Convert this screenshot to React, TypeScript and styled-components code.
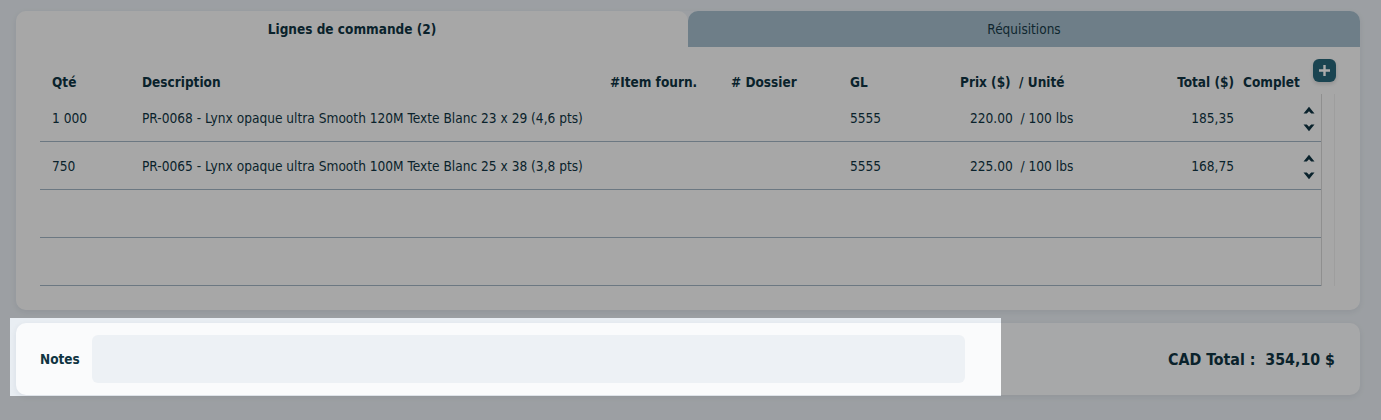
import styled, { createGlobalStyle } from "styled-components";

const GlobalStyle = createGlobalStyle`
  html, body {
    margin: 0;
    height: 100%;
    background: #e9eef3;
  }
  body {
    font-family: "DejaVu Sans Condensed", "DejaVu Sans", sans-serif;
    color: #0f3442;
  }
`;

const Page = styled.div`
  display: flex;
  flex-direction: column;
  gap: 13px;
  padding: 11px 21px 0 16px;
`;

const OrderCard = styled.div`
  display: flex;
  flex-direction: column;
  border-radius: 10px;
  box-shadow: 0 2px 6px rgba(20, 40, 60, 0.08);
`;

const Tabs = styled.div`
  display: grid;
  grid-template-columns: 672px 1fr;
`;

const Tab = styled.div<{ $active?: boolean }>`
  height: 36px;
  display: flex;
  align-items: center;
  justify-content: center;
  border-radius: 10px 10px 0 0;
  font-size: 13.5px;
  font-weight: ${({ $active }) => ($active ? 700 : 400)};
  background: ${({ $active }) => ($active ? "#fafafa" : "#a4bccb")};
  color: ${({ $active }) => ($active ? "#0f3442" : "#173a47")};
`;

const Body = styled.div`
  position: relative;
  background: #fafafa;
  border-radius: 0 0 10px 10px;
  padding: 11px 25px 24px 24px;
  height: 228px;
`;

const PlusButton = styled.div`
  position: absolute;
  top: 12px;
  right: 24px;
  width: 23px;
  height: 23px;
  border-radius: 6px;
  background: #286679;
  display: flex;
  align-items: center;
  justify-content: center;
  box-shadow: 0 2px 4px rgba(0, 0, 0, 0.15);
`;

const cols = "90px 468px 121px 119px 110px 162px 130px 81px";

const HeaderRow = styled.div`
  display: grid;
  grid-template-columns: ${cols};
  height: 36px;
  align-items: end;
  padding-bottom: 4px;
  box-sizing: border-box;
  margin-right: 14px;
  font-size: 13.5px;
  font-weight: 700;
`;

const HeadCell = styled.div<{ $right?: boolean; $pad?: number }>`
  padding-left: ${({ $pad }) => $pad ?? 12}px;
  padding-right: ${({ $right }) => ($right ? 6 : 0)}px;
  text-align: ${({ $right }) => ($right ? "right" : "left")};
  white-space: nowrap;
`;

const Scroller = styled.div`
  display: flex;
  border-right: 1px solid #ececec;
`;

const Rows = styled.div`
  flex: 1;
  border-right: 1px solid #d6d6d6;
  margin-right: 13px;
`;

const Row = styled.div`
  display: grid;
  grid-template-columns: ${cols};
  height: 48px;
  align-items: center;
  border-bottom: 1px solid #a2b3c2;
  box-sizing: border-box;
  font-size: 13.6px;
`;

const Cell = styled.div<{ $right?: boolean; $pad?: number }>`
  padding-left: ${({ $pad }) => $pad ?? 12}px;
  padding-right: ${({ $right }) => ($right ? 6 : 0)}px;
  text-align: ${({ $right }) => ($right ? "right" : "left")};
  white-space: nowrap;
`;

const Sorter = styled.div`
  display: flex;
  flex-direction: column;
  align-items: center;
  gap: 10px;
  padding-left: 56px;
  padding-top: 2px;
`;

const NotesCard = styled.div`
  display: flex;
  align-items: center;
  height: 72px;
  padding: 0 25px 0 24px;
  background: #fafbfc;
  border-radius: 10px;
  box-shadow: 0 2px 6px rgba(20, 40, 60, 0.08);
`;

const Label = styled.div`
  font-size: 13.5px;
  font-weight: 700;
  width: 52px;
  padding-bottom: 1px;
`;

const NotesInput = styled.div`
  width: 873px;
  height: 48px;
  border-radius: 6px;
  background: #edf1f5;
`;

const Total = styled.div`
  margin-left: auto;
  font-size: 15.8px;
  font-weight: 700;
  white-space: pre;
`;

const Spotlight = styled.div`
  position: fixed;
  left: 10px;
  top: 318px;
  width: 991px;
  height: 78px;
  pointer-events: none;
  box-shadow: 0 0 0 3000px rgba(0, 0, 0, 0.33);
`;

const Caret = ({ up }: { up?: boolean }) => (
  <svg width="12" height="8" viewBox="0 0 12 8">
    <path
      d={
        up
          ? "M0.5 7.5 L6 0.8 L11.5 7.5 L8.2 7.5 L6 5.2 L3.8 7.5 Z"
          : "M0.5 0.5 L6 7.2 L11.5 0.5 L8.2 0.5 L6 2.8 L3.8 0.5 Z"
      }
      fill="#0f3442"
    />
  </svg>
);

const lines = [
  {
    qty: "1 000",
    desc: "PR-0068 - Lynx opaque ultra Smooth 120M Texte Blanc 23 x 29 (4,6 pts)",
    gl: "5555",
    price: "220.00",
    total: "185,35",
  },
  {
    qty: "750",
    desc: "PR-0065 - Lynx opaque ultra Smooth 100M Texte Blanc 25 x 38 (3,8 pts)",
    gl: "5555",
    price: "225.00",
    total: "168,75",
  },
];

export default function App() {
  return (
    <>
      <GlobalStyle />
      <Page>
        <OrderCard>
          <Tabs>
            <Tab $active>Lignes de commande (2)</Tab>
            <Tab>Réquisitions</Tab>
          </Tabs>
          <Body>
            <PlusButton>
              <svg width="13" height="13" viewBox="0 0 13 13">
                <path d="M6.5 1v11M1 6.5h11" stroke="#fff" strokeWidth="2.4" />
              </svg>
            </PlusButton>
            <HeaderRow>
              <HeadCell>Qté</HeadCell>
              <HeadCell>Description</HeadCell>
              <HeadCell>#Item fourn.</HeadCell>
              <HeadCell># Dossier</HeadCell>
              <HeadCell>GL</HeadCell>
              <HeadCell>Prix ($)&nbsp; / Unité</HeadCell>
              <HeadCell $right>Total ($)</HeadCell>
              <HeadCell $pad={3}>Complet</HeadCell>
            </HeaderRow>
            <Scroller>
              <Rows>
                {lines.map((l) => (
                  <Row key={l.desc}>
                    <Cell>{l.qty}</Cell>
                    <Cell>{l.desc}</Cell>
                    <Cell />
                    <Cell />
                    <Cell>{l.gl}</Cell>
                    <Cell $pad={22}>{l.price} &nbsp;/ 100 lbs</Cell>
                    <Cell $right>{l.total}</Cell>
                    <Sorter>
                      <Caret up />
                      <Caret />
                    </Sorter>
                  </Row>
                ))}
                <Row />
                <Row />
              </Rows>
            </Scroller>
          </Body>
        </OrderCard>
        <NotesCard>
          <Label>Notes</Label>
          <NotesInput />
          <Total>CAD Total :  354,10 $</Total>
        </NotesCard>
      </Page>
      <Spotlight />
    </>
  );
}
